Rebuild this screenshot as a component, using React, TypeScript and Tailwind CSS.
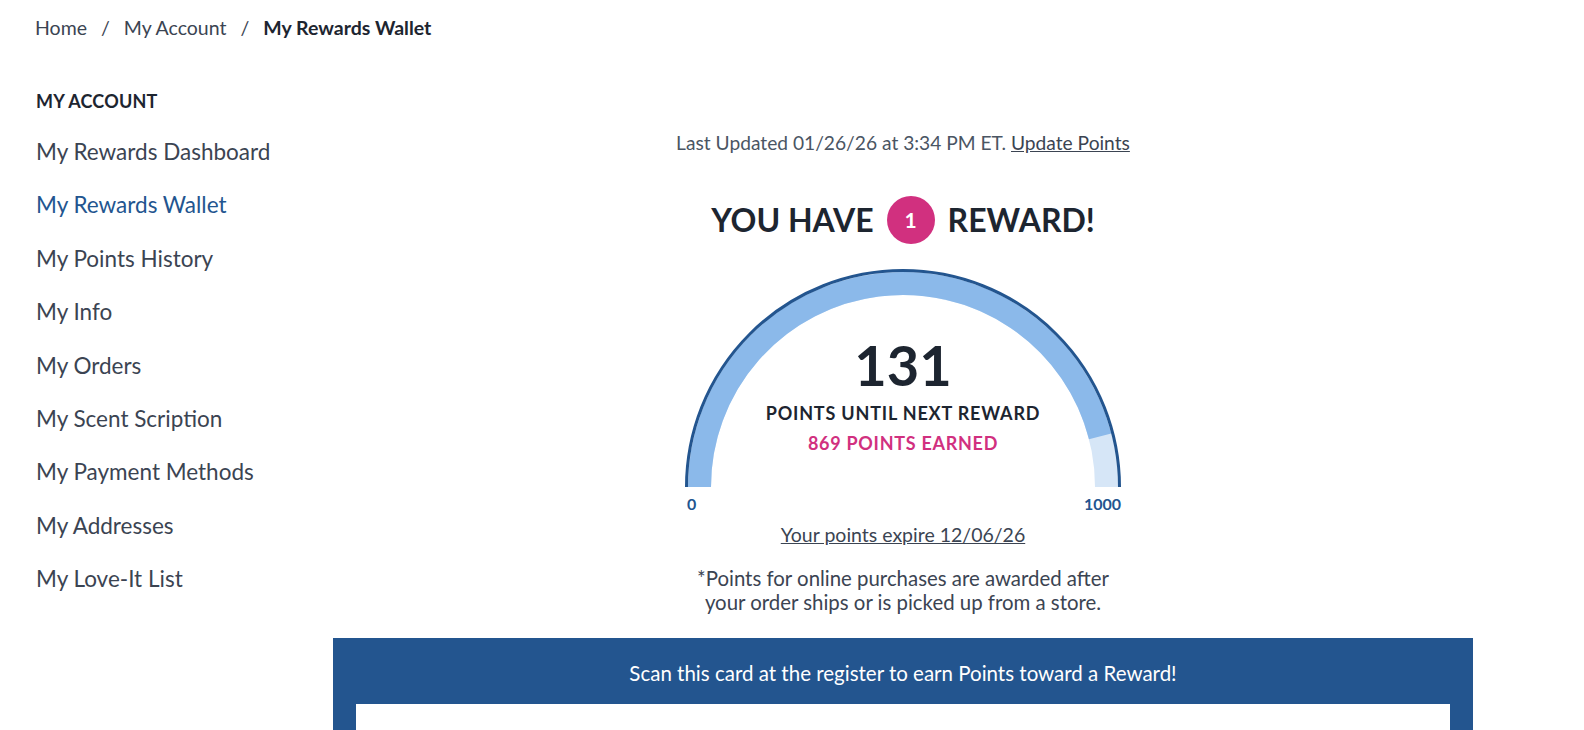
import React from 'react';

const font = { fontFamily: 'Lato, "Noto Sans", sans-serif' };

const navItems = [
  'My Rewards Dashboard',
  'My Rewards Wallet',
  'My Points History',
  'My Info',
  'My Orders',
  'My Scent Scription',
  'My Payment Methods',
  'My Addresses',
  'My Love-It List',
];

const Gauge: React.FC = () => {
  // semicircle centred at (220, 219)
  const cx = 220;
  const cy = 219;
  const r = 203.5;
  const frac = 0.92;
  const a = Math.PI * frac;
  const ex = cx - r * Math.cos(a);
  const ey = cy - r * Math.sin(a);
  return (
    <div className="relative w-[440px] h-[220px]">
      <svg className="absolute inset-0" width="440" height="220" viewBox="0 0 440 220">
        <path d={`M ${cx - r} ${cy} A ${r} ${r} 0 0 1 ${cx + r} ${cy}`} fill="none" stroke="#d6e6f7" strokeWidth="23" />
        <path d={`M ${cx - r} ${cy} A ${r} ${r} 0 0 1 ${ex} ${ey}`} fill="none" stroke="#8bb9ea" strokeWidth="23" />
        <path d={`M ${cx - 216.5} ${cy} A 216.5 216.5 0 0 1 ${cx + 216.5} ${cy}`} fill="none" stroke="#23558f" strokeWidth="3" />
      </svg>
      <div className="relative flex flex-col items-center pt-[66px]">
        <div className="text-[56px] leading-[62px] font-bold text-[#1d2530]">131</div>
        <div className="mt-[6px] text-[18px] leading-[22px] font-bold tracking-[0.045em] text-[#1d2530]">POINTS UNTIL NEXT REWARD</div>
        <div className="mt-[8px] text-[18px] leading-[22px] font-bold tracking-[0.04em] text-[#d1307f]">869 POINTS EARNED</div>
      </div>
    </div>
  );
};

export default function App() {
  return (
    <div className="h-[730px] overflow-hidden bg-white text-[#1d2530]" style={font}>
      <nav className="pl-[35px] pt-4 h-[40px] text-[19.5px] leading-6 text-[#3b4452]">
        <span>Home</span>
        <span className="mx-[14px]">/</span>
        <span>My Account</span>
        <span className="mx-[14px]">/</span>
        <span className="font-bold text-[#1d2530]">My Rewards Wallet</span>
      </nav>

      <div className="flex pl-[36px] mt-[49px]">
        <aside className="w-[297px] shrink-0">
          <h2 className="text-[18px] leading-6 font-bold tracking-[0.01em] text-[#1d2530]">MY ACCOUNT</h2>
          <ul className="mt-[24px] flex flex-col gap-[23.4px]">
            {navItems.map((item) => (
              <li
                key={item}
                className={`text-[22.5px] leading-[30px] ${item === 'My Rewards Wallet' ? 'text-[#23558f]' : 'text-[#3b4452]'}`}
              >
                {item}
              </li>
            ))}
          </ul>
        </aside>

        <main className="w-[1140px] shrink-0 flex flex-col items-center pt-[42px]">
          <p className="text-[19.2px] leading-6 text-[#4a5563]">
            Last Updated 01/26/26 at 3:34 PM ET. <span className="underline text-[#3b4452]">Update Points</span>
          </p>

          <h1 className="mt-[41px] flex items-center gap-[13px] text-[32px] leading-[48px] font-bold text-[#1d2530]">
            <span>YOU HAVE</span>
            <span className="w-[48px] h-[48px] rounded-full bg-[#d1307f] text-white text-[21px] flex items-center justify-center">1</span>
            <span>REWARD!</span>
          </h1>

          <div className="mt-[24px]">
            <Gauge />
            <div className="mt-[6px] flex justify-between px-[2px] text-[16px] leading-5 font-bold text-[#23558f]">
              <span className="pl-[2px]">0</span>
              <span>1000</span>
            </div>
          </div>

          <p className="mt-[9px] text-[19.5px] leading-6 underline text-[#3b4452]">Your points expire 12/06/26</p>

          <p className="mt-[19px] text-[20.4px] leading-6 text-center text-[#3b4452]">
            *Points for online purchases are awarded after
            <br />
            your order ships or is picked up from a store.
          </p>

          <section className="mt-[24px] w-full bg-[#23558f] px-[23px] pt-[23px]">
            <p className="text-center text-white text-[20.5px] leading-6">Scan this card at the register to earn Points toward a Reward!</p>
            <div className="mt-[19px] bg-white h-[60px]" />
          </section>
        </main>
      </div>
    </div>
  );
}
